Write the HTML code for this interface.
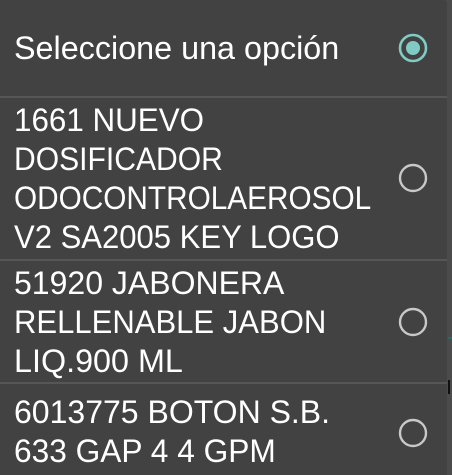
<!DOCTYPE html>
<html><head><style>
html,body{margin:0;padding:0;}
body{width:452px;height:475px;background:#4b4b4b;position:relative;overflow:hidden;font-family:"Liberation Sans",sans-serif;}
.panel{position:absolute;left:0;top:0;width:447px;height:475px;background:#424242;border-top-right-radius:4px;}
.div{position:absolute;left:0;width:447px;height:2px;background:#565656;}
.t{position:absolute;left:14px;color:#fff;font-size:32px;line-height:39px;letter-spacing:0;white-space:nowrap;}
.t div{transform-origin:0 0;}
svg{position:absolute;}
</style></head><body>
<div class="panel">
<div class="t" style="top:29px;transform:scaleX(1.01);transform-origin:0 0">Seleccione una opción</div>
<div class="div" style="top:96px"></div>
<div class="t" style="top:101px"><div style="transform:scaleX(.98)">1661 NUEVO</div><div style="transform:scaleX(.94)">DOSIFICADOR</div><div style="transform:scaleX(.93)">ODOCONTROLAEROSOL</div><div style="transform:scaleX(.97)">V2 SA2005 KEY LOGO</div></div>
<div class="div" style="top:259px"></div>
<div class="t" style="top:264px"><div style="transform:scaleX(1)">51920 JABONERA</div><div style="transform:scaleX(.97)">RELLENABLE JABON</div><div style="transform:scaleX(1.01)">LIQ.900 ML</div></div>
<div class="div" style="top:382px"></div>
<div class="t" style="top:393px"><div style="transform:scaleX(1)">6013775 BOTON S.B.</div><div style="transform:scaleX(.99)">633 GAP 4 4 GPM</div></div>
<svg style="left:397px;top:32px" width="32" height="32"><circle cx="16" cy="16" r="13" fill="none" stroke="#80cbc4" stroke-width="2.6"/><circle cx="16" cy="16" r="7" fill="#80cbc4"/></svg>
<svg style="left:397px;top:162px" width="32" height="32"><circle cx="16" cy="16" r="13" fill="none" stroke="#c8c8c8" stroke-width="2.4"/></svg>
<svg style="left:397px;top:306px" width="32" height="32"><circle cx="16" cy="16" r="13" fill="none" stroke="#c8c8c8" stroke-width="2.4"/></svg>
<svg style="left:397px;top:417px" width="32" height="32"><circle cx="16" cy="16" r="13" fill="none" stroke="#c8c8c8" stroke-width="2.4"/></svg>
</div>
<div style="position:absolute;left:448px;top:337px;width:4px;height:2px;background:#2a6a66"></div>
<div style="position:absolute;left:448px;top:380px;width:2px;height:14px;background:#111"></div>
</body></html>
